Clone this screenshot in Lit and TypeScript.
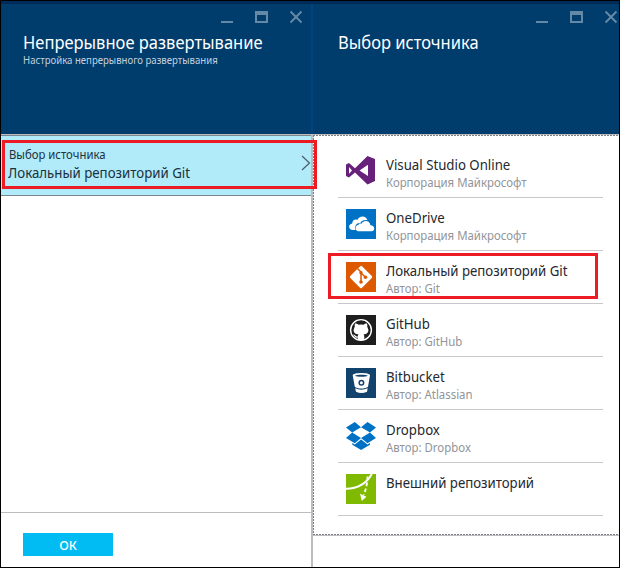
import { LitElement, html, css, svg, nothing } from "lit";
import { customElement, property } from "lit/decorators.js";

const icons: Record<string, unknown> = {
  vs: svg`<path fill="#68217a" fill-rule="evenodd" d="M0 8.5L3 7L9 12.2L21.5 0L29 3V25L21.5 28.5L9 16.5L3 21.5L0 20ZM3 11V17.8L6 14.4ZM22 8.8L13.5 14.4L22 20Z"/>`,
  onedrive: svg`<path fill="#0072c6" d="M0 0h30v30H0z"/>
    <path fill="#fff" d="M7 21C2 21 2 15 6.2 14.5C6.2 11 9.6 9.8 11.3 11C13.2 6 20.5 6.3 21.4 11.2C18 10.6 15.5 11.8 14.3 14C10.5 13.4 8.2 17 9.6 21Z"/>
    <path fill="#fff" d="M12.5 22.3C8.6 22.3 8.8 16.4 12.3 16.1C13 14.4 14.5 14.3 15.5 14.8C17.5 10.4 24 11.4 24.4 16.2C29.4 16.2 29.2 22.3 25.5 22.3Z"/>`,
  git: svg`<path fill="#dd5900" d="M0 0h30v30H0z"/>
    <path fill="#fff" d="M15 3.8Q15.6 3.8 16 4.3L25.8 14Q26.8 15 25.8 16L16 25.7Q15 26.7 14 25.7L4.3 16Q3.3 15 4.3 14L11 7.3Z"/>
    <g stroke="#dd5900" stroke-width="1.5" fill="none"><path d="M11.5 6.5L15 10V20M15 11L19.3 15"/></g>
    <g fill="#dd5900"><circle cx="15" cy="10.7" r="1.7"/><circle cx="15" cy="20" r="1.8"/><circle cx="19.5" cy="15.2" r="1.8"/></g>`,
  github: svg`<path fill="#1e1e1e" d="M0 0h30v30H0z"/>
    <circle cx="15" cy="15" r="10.4" fill="none" stroke="#fff" stroke-width="1.4"/>
    <path fill="#fff" d="M9 8.6Q10.5 8.2 12.6 9.8Q15 9.3 17.4 9.8Q19.5 8.2 21 8.6Q21.6 10.4 21.2 11.6Q24.8 18.7 17.5 19.6Q18.4 20.4 18.3 22V24.8Q15 26 11.7 24.8V22.6Q9.2 23 8.2 21Q7.5 20 6.8 19.6Q8.8 19.3 9.8 21.1Q10.5 21.9 11.8 21.4Q11.8 20.2 12.5 19.6Q5.2 18.7 8.8 11.6Q8.4 10.4 9 8.6Z"/>`,
  bitbucket: svg`<path fill="#12436d" d="M0 0h30v30H0z"/>
    <path fill="#fff" fill-rule="evenodd" d="M6.7 7.3C7 4.2 23.8 4.2 24 7.3L22 18.8C19.5 21.2 11.2 21.2 8.8 18.8ZM9 7.7C11 9 20 9 21.8 7.7C20 6.3 11 6.3 9 7.7ZM15.4 11.8A3 3 0 1 0 15.4 17.8A3 3 0 1 0 15.4 11.8Z"/>
    <circle cx="15.4" cy="14.8" r="1.5" fill="#fff"/>
    <path fill="#fff" d="M9.2 20.3Q15.4 23.2 21.7 20.3L21 23.8Q15.4 26.4 10 23.8Z"/>`,
  dropbox: svg`<path fill="#0072c6" d="M8.8 1L15 6.2L6.2 11.6L0 6.5ZM21.5 1L30 6.5L24 11.6L15 6.2ZM0 17L6.2 11.6L15 17L8.8 22.3ZM15 17L24 11.6L30 17L21.5 22.3ZM15.1 18.4L21.5 23.6L24 22V23.8L15.1 29L6.3 23.8V22L8.8 23.6Z"/>`,
  external: svg`<path fill="#7fba00" d="M0 0h30v30H0z"/>
    <path fill="none" stroke="#fff" stroke-width="2" d="M0 14.8C11 14.5 20.5 9.5 25.8 0"/>
    <path fill="none" stroke="#fff" stroke-width="1.8" stroke-dasharray="3.8 2.3" d="M21.5 2.5Q21.5 11 17.8 21"/>
    <path fill="#fff" d="M14 19.8L20.4 22.8L15.8 27Z"/>`,
};

const sources = [
  { icon: "vs", name: "Visual Studio Online", by: "Корпорация Майкрософт" },
  { icon: "onedrive", name: "OneDrive", by: "Корпорация Майкрософт" },
  { icon: "git", name: "Локальный репозиторий Git", by: "Автор: Git", marked: true },
  { icon: "github", name: "GitHub", by: "Автор: GitHub" },
  { icon: "bitbucket", name: "Bitbucket", by: "Автор: Atlassian" },
  { icon: "dropbox", name: "Dropbox", by: "Автор: Dropbox" },
  { icon: "external", name: "Внешний репозиторий", by: "" },
];

@customElement("blade-header")
class BladeHeader extends LitElement {
  @property() heading = "";
  @property() sub = "";
  static styles = css`
    :host { display: block; height: 133px; box-sizing: border-box; background: #003c6c; border-top: 3px solid #002a57; color: #fff; overflow: hidden; --indent: 22px; --end: 8px; }
    :host(.second) { --indent: 25px; --end: 1px; }
    .controls { display: flex; justify-content: flex-end; height: 26px; padding: 6px var(--end) 0 0; box-sizing: border-box; }
    svg { display: block; flex: none; }
    .title, .sub { margin-left: var(--indent); white-space: nowrap; transform-origin: 0 50%; }
    .title { font-size: 18.5px; line-height: 24px; transform: scaleX(0.893); }
    .sub { margin-top: -2px; font-size: 10px; line-height: 16px; color: #c4d1dc; transform: scaleX(0.96); }
  `;
  render() {
    return html`
      <div class="controls">
        <svg width="84" height="14" viewBox="0 0 84 14">
          <g fill="#6389a7"><path d="M2 11h12v2H2z" /><path fill-rule="evenodd" d="M36 1h13v12H36zM38 5v6h9V5z" /></g>
          <path d="M71.5 1.5L82.5 12.5M82.5 1.5L71.5 12.5" stroke="#6389a7" stroke-width="2" />
        </svg>
      </div>
      <div class="title">${this.heading}</div>
      ${this.sub ? html`<div class="sub">${this.sub}</div>` : nothing}
    `;
  }
}

@customElement("app-root")
class AppRoot extends LitElement {
  static styles = css`
    :host { display: block; width: 620px; height: 568px; font-family: "Noto Sans", "Open Sans", sans-serif; }
    .frame { display: grid; grid-template-columns: 310px 2px 306px; width: 620px; height: 568px; box-sizing: border-box; border: 1px solid #000; background: #fff; overflow: hidden; }
    .blade { display: flex; flex-direction: column; min-width: 0; position: relative; }
    .divider { background: linear-gradient(#002a57 3px, #004480 3px, #004480 133px, #bbbdc1 133px); }
    .selected { position: relative; height: 62px; box-sizing: border-box; background: #b1ebfa; border-top: 1px solid #bbbdc1; border-bottom: 1px solid #7d858c; box-shadow: inset 0 1px #7d858c; padding: 11px 0 0 8px; color: #20303c; white-space: nowrap; }
    .label, .value, .name, .by { transform-origin: 0 50%; }
    .label { font-size: 11.75px; line-height: 16px; transform: scaleX(0.965); }
    .value { font-size: 13.5px; line-height: 20px; margin: 1px 0 0 -1px; transform: scaleX(0.983); }
    .chevron { position: absolute; right: 0; top: 20px; }
    .mark { position: absolute; box-sizing: border-box; border: 3px solid #ed1c24; z-index: 2; }
    .mark-left { left: 1px; top: 5px; width: 315px; height: 49px; }
    .mark-row { left: -10px; top: 2px; width: 270px; height: 46px; }
    .footer { margin-top: auto; height: 55px; box-sizing: border-box; border-top: 1px solid #bbbdc1; padding: 20px 0 0 22px; }
    .ok { display: block; width: 90px; height: 23px; border: 0; padding: 2px 0 0; background: #00bcf2; color: #fff; font: 500 12.5px/22px "Noto Sans", sans-serif; text-align: center; }
    .list { display: flex; flex-direction: column; height: 402px; box-sizing: border-box; padding: 10px 16px 0 25px; border-top: 1px solid #bbbdc1; border-bottom: 1px solid #bbbdc1;
      background: repeating-linear-gradient(90deg, #7d7d82 0 2px, transparent 2px 3px) 0 0 / 100% 1px no-repeat,
        repeating-linear-gradient(90deg, #7d7d82 0 2px, transparent 2px 3px) 0 100% / 100% 1px no-repeat,
        repeating-linear-gradient(#7d7d82 0 2px, transparent 2px 3px) 0 0 / 1px 100% no-repeat; }
    .row { position: relative; display: flex; height: 53px; box-sizing: border-box; border-bottom: 1px solid #c8c8cb; padding: 11px 0 0 8px; white-space: nowrap; }
    .icon { display: block; width: 30px; height: 30px; flex: none; margin-right: 10px; }
    .name { font-size: 13.5px; line-height: 18px; color: #25282e; transform: scaleX(0.98); }
    .by { font-size: 12px; line-height: 18px; color: #919498; transform: scaleX(0.95); }
  `;
  render() {
    return html`
      <div class="frame">
        <div class="blade">
          <blade-header heading="Непрерывное развертывание" sub="Настройка непрерывного развертывания"></blade-header>
          <div class="selected">
            <div class="label">Выбор источника</div>
            <div class="value">Локальный репозиторий Git</div>
            <svg class="chevron" width="10" height="16" viewBox="0 0 10 16"><path d="M1 1L8.5 8L1 15" fill="none" stroke="#4b5a64" stroke-width="1.2" /></svg>
            <div class="mark mark-left"></div>
          </div>
          <div class="footer"><button class="ok">ОК</button></div>
        </div>
        <div class="divider"></div>
        <div class="blade">
          <blade-header class="second" heading="Выбор источника"></blade-header>
          <div class="list">
            ${sources.map(
              (s) => html`<div class="row">
                <svg class="icon" viewBox="0 0 30 30">${icons[s.icon]}</svg>
                <div><div class="name">${s.name}</div><div class="by">${s.by}</div></div>
                ${s.marked ? html`<div class="mark mark-row"></div>` : nothing}
              </div>`
            )}
          </div>
        </div>
      </div>
    `;
  }
}
